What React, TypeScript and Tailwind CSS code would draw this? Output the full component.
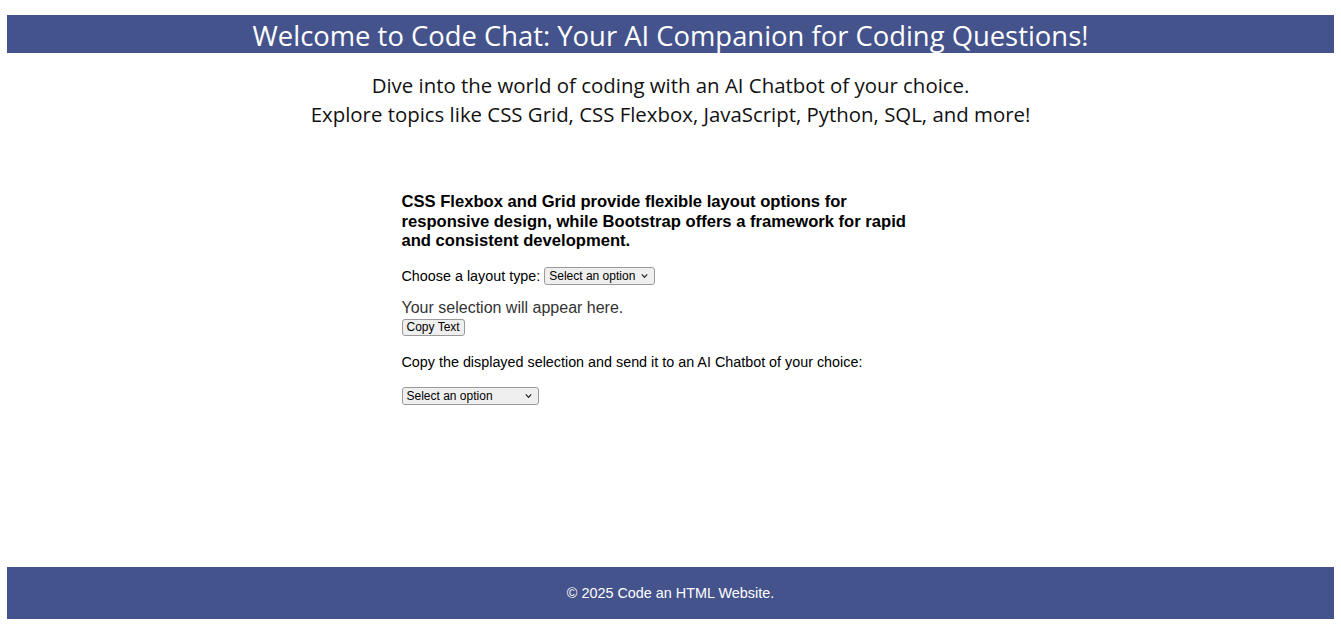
const Dropdown = ({ width }: { width: string }) => {
  return (
    <span className={`relative inline-block align-middle ${width}`}>
      <select className="block w-full h-[18px] appearance-none rounded-[3px] border border-[#9a9a9a] bg-[#efefef] pl-[4px] pr-[16px] text-[12px] leading-[16px] text-black font-['Liberation_Sans',Arial,sans-serif]">
        <option>Select an option</option>
      </select>
      <svg
        className="pointer-events-none absolute right-[7px] top-1/2 -translate-y-1/2"
        width="7"
        height="5"
        viewBox="0 0 7 5"
        fill="none"
      >
        <polyline points="0.8,0.8 3.5,3.8 6.2,0.8" stroke="#222" strokeWidth="1.2" />
      </svg>
    </span>
  );
};

const App = () => {
  return (
    <div className="min-h-[633px] bg-white px-[7px] pt-[15px] font-['Liberation_Sans',Arial,sans-serif] text-black">
      <header className="flex h-[38px] items-center justify-center bg-[#45538c] pt-[3px]">
        <h1 className="font-['Open_Sans','Noto_Sans',sans-serif] text-[27.4px] leading-none text-white">
          Welcome to Code Chat: Your AI Companion for Coding Questions!
        </h1>
      </header>

      <div className="mt-[18px] text-center font-['Open_Sans','Noto_Sans',sans-serif] text-[20.4px] leading-[29px] text-[#111]">
        <p>Dive into the world of coding with an AI Chatbot of your choice.</p>
        <p>Explore topics like CSS Grid, CSS Flexbox, JavaScript, Python, SQL, and more!</p>
      </div>

      <main className="mx-auto mt-[63px] w-[538px]">
        <h2 className="w-[525px] text-[16.6px] font-bold leading-[19.5px]">
          CSS Flexbox and Grid provide flexible layout options for responsive design, while Bootstrap offers a framework for rapid and consistent development.
        </h2>

        <div className="mt-[15px] flex items-center gap-[4px] text-[14.35px]">
          <label>Choose a layout type:</label>
          <Dropdown width="w-[111px]" />
        </div>

        <p className="mt-[12px] text-[16px] leading-[18px] text-[#333]">Your selection will appear here.</p>
        <button className="mt-[2px] block h-[17px] rounded-[3px] border border-[#9a9a9a] bg-[#efefef] px-[4px] text-[12px] leading-[15px]">
          Copy Text
        </button>

        <p className="mt-[17px] text-[14.35px] leading-[18px]">
          Copy the displayed selection and send it to an AI Chatbot of your choice:
        </p>

        <div className="mt-[12px]">
          <Dropdown width="w-[137px]" />
        </div>
      </main>

      <footer className="mt-[160px] flex h-[52px] items-center justify-center bg-[#45538c] pt-[2px] text-[14.4px] text-white">
        © 2025 Code an HTML Website.
      </footer>
    </div>
  );
};

export default App;
